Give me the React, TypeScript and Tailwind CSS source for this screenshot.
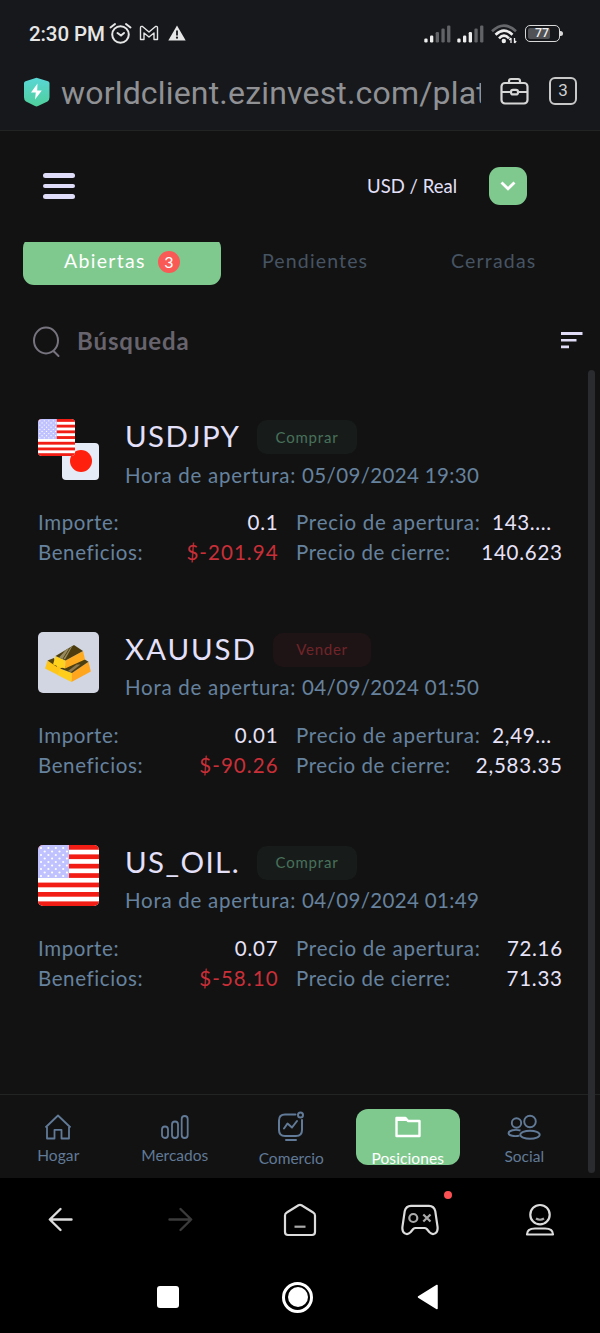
import type { ReactNode } from "react";

type Side = "buy" | "sell";

interface Position {
  symbol: string;
  symbolClass: string;
  side: Side;
  opened: string;
  amount: string;
  profit: string;
  openPrice: string;
  openPriceClass: string;
  closePrice: string;
  icon: ReactNode;
}

function UsFlag({ size }: { size: number }) {
  const stripes = [0, 2, 4, 6, 8, 10, 12];
  const stars: ReactNode[] = [];
  for (let r = 0; r < 9; r++) {
    for (let c = 0; c < 4; c++) {
      stars.push(<circle key={`${r}-${c}`} cx={3 + c * 7.4 + (r % 2 ? 3.7 : 0)} cy={3 + r * 3.5} r="1.1" fill="#fff" />);
    }
  }
  return (
    <svg width={size} height={size} viewBox="0 0 61 61" className="block">
      <rect width="61" height="61" fill="#fff" />
      {stripes.map((i) => (
        <rect key={i} y={i * 4.7} width="61" height="4.7" fill="#f21d14" />
      ))}
      <rect width="31" height="33" fill="#bfc2ff" />
      {stars}
    </svg>
  );
}

function UsdJpyIcon() {
  return (
    <div className="relative h-[61px] w-[61px] shrink-0">
      <div className="absolute right-0 bottom-0 flex h-[37px] w-[37px] items-center justify-center rounded-[4px] bg-[#e6ebf8]">
        <div className="h-[22px] w-[22px] rounded-full bg-[#ff210d]" />
      </div>
      <div className="absolute top-0 left-0 h-[37px] w-[37px] overflow-hidden rounded-[4px]">
        <UsFlag size={37} />
      </div>
    </div>
  );
}

function GoldIcon() {
  return (
    <div className="h-[61px] w-[61px] shrink-0 overflow-hidden rounded-[5px] bg-[#d1d6e2]">
      <svg width="61" height="61" viewBox="0 0 61 61">
        <path d="M9.500 28.500 7 36.500l13 6.500 4-8z" fill="#ffc61a" />
        <path d="m9.500 28.500 6.500-2.500 3 9z" fill="#55440f" />
        <path d="m22 36.500 12 4.500-.5 9L19.500 43z" fill="#ffce1c" />
        <path d="m34 41 16.500-11.200 2.300 9.700L33.500 50z" fill="#ffa51e" />
        <path d="m22 36.500 24-9.500 4.500 2.800L34 41z" fill="#4d3e10" />
        <path d="m30 39 8.500-6.500 4 0-9.500 7.500z" fill="#8d7a50" />
        <path d="m17.500 24 10 4.500-.5 8L15 32.500z" fill="#ffd31d" />
        <path d="m27.500 28.500 17.500-9.500 2 8.500-20 9z" fill="#ffab20" />
        <path d="m17.500 24 18.500-11 9 6-17.500 9.500z" fill="#4c3c0e" />
        <path d="m28 17.700 3.500-2L24.500 27 21 25.500zM33 14.700l1.500-.8-7.500 13.500-1.500-.6z" fill="#96895f" />
      </svg>
    </div>
  );
}

const positions: Position[] = [
  {
    symbol: "USDJPY",
    symbolClass: "w-[114px] tracking-[1.35px]",
    side: "buy",
    opened: "05/09/2024 19:30",
    amount: "0.1",
    profit: "$-201.94",
    openPrice: "143....",
    openPriceClass: "pr-[11px]",
    closePrice: "140.623",
    icon: <UsdJpyIcon />,
  },
  {
    symbol: "XAUUSD",
    symbolClass: "w-[130px] tracking-[1.9px]",
    side: "sell",
    opened: "04/09/2024 01:50",
    amount: "0.01",
    profit: "$-90.26",
    openPrice: "2,49...",
    openPriceClass: "pr-[11px]",
    closePrice: "2,583.35",
    icon: <GoldIcon />,
  },
  {
    symbol: "US_OIL.",
    symbolClass: "w-[114px] tracking-[1.4px]",
    side: "buy",
    opened: "04/09/2024 01:49",
    amount: "0.07",
    profit: "$-58.10",
    openPrice: "72.16",
    openPriceClass: "",
    closePrice: "71.33",
    icon: (
      <div className="h-[61px] w-[61px] shrink-0 overflow-hidden rounded-[5px]">
        <UsFlag size={61} />
      </div>
    ),
  },
];

function PositionCard({ p }: { p: Position }) {
  return (
    <article className="h-[212.8px] pr-[38px] pl-[38px]">
      <div className="flex gap-[26px]">
        {p.icon}
        <div className="pt-px">
          <div className="flex h-8 gap-[18px]">
            <h2 className={`text-[29.5px] leading-[31px] whitespace-nowrap text-[#e4e0fa] ${p.symbolClass}`}>{p.symbol}</h2>
            {p.side === "buy" ? (
              <span className="flex h-[34px] w-[100px] items-center justify-center rounded-[10px] bg-[#171c1b] text-[15px] tracking-[0.8px] text-[#48715a]">Comprar</span>
            ) : (
              <span className="flex h-[34px] w-[98px] items-center justify-center rounded-[10px] bg-[#1e1415] text-[15px] tracking-[0.75px] text-[#712429]">Vender</span>
            )}
          </div>
          <p className="mt-[8.6px] text-[20.5px] leading-7 whitespace-nowrap text-[#66829e]">
            <span className="tracking-[0.73px]">Hora de apertura: </span>
            <span className="tracking-[0.36px]">{p.opened}</span>
          </p>
        </div>
      </div>
      <dl className="mt-[19.8px] grid grid-cols-[240px_266px] gap-x-[18px] text-[20.5px] leading-[29.6px] whitespace-nowrap text-[#66829e]">
        <div className="flex justify-between">
          <dt className="tracking-[0.62px]">Importe:</dt>
          <dd className="-mr-[0.5px] tracking-[0.8px] text-[#e7e3fa]">{p.amount}</dd>
        </div>
        <div className="flex justify-between">
          <dt className="tracking-[0.74px]">Precio de apertura:</dt>
          <dd className={`-mr-[0.7px] tracking-[0.65px] text-[#e7e3fa] ${p.openPriceClass}`}>{p.openPrice}</dd>
        </div>
        <div className="flex justify-between">
          <dt className="tracking-[0.6px]">Beneficios:</dt>
          <dd className="-mr-[0.6px] tracking-[1.05px] text-[#c92f38]">{p.profit}</dd>
        </div>
        <div className="flex justify-between">
          <dt className="tracking-[0.56px]">Precio de cierre:</dt>
          <dd className="-mr-[0.7px] tracking-[0.75px] text-[#e7e3fa]">{p.closePrice}</dd>
        </div>
      </dl>
    </article>
  );
}

function Signal({ level }: { level: number }) {
  const bars = [4, 7, 10.5, 14, 17];
  return (
    <svg width="27" height="18" viewBox="0 0 27 18">
      {bars.map((h, i) => (
        <rect key={h} x={0.3 + i * 5.700} y={17.500 - h} width="3.300" height={h} rx="1.2" fill={i < level ? "#eeeeee" : "#626366"} />
      ))}
    </svg>
  );
}

function StatusBar() {
  return (
    <div className="flex h-[67px] items-center pl-[29px] text-[#e6e6e6]">
      <span className="w-[80px] pt-px font-['Roboto',sans-serif] text-[20.5px] leading-6 font-medium tracking-[-0.1px] whitespace-nowrap">2:30 PM</span>
      <svg width="24" height="22" viewBox="0 0 24 22" fill="none" stroke="currentColor" strokeWidth="2" strokeLinecap="round" className="-mt-0.5">
        <circle cx="11.500" cy="12.500" r="8.300" />
        <path d="M1.500 5.500 6 2M21.500 5.500 17 2M8.500 11l3.500 2.500 3-2.500" />
      </svg>
      <svg width="20" height="16" viewBox="0 0 20 16" fill="none" stroke="currentColor" strokeWidth="1.400" strokeLinejoin="round" className="-mt-px ml-[6px]">
        <path d="M1.500 14.500V3Q1.500.8 3.500 1.500L10 7l6.500-5.500q2-.7 2 1.500v11.500H15V8l-5 4-5-4v6.500z" />
      </svg>
      <svg width="18" height="16" viewBox="0 0 18 16" className="-mt-px ml-[9px]">
        <path d="M9 .5 17.700 15.500H.3z" fill="#e6e6e6" />
        <path d="M9 5.500v5" stroke="#17181c" strokeWidth="1.800" />
        <circle cx="9" cy="12.700" r="1.100" fill="#17181c" />
      </svg>
      <div className="ml-[238px] flex items-center gap-[6px]">
        <Signal level={2} />
        <Signal level={3} />
      </div>
      <svg width="26" height="20" viewBox="0 0 26 20" fill="none" strokeWidth="2.600" className="ml-[7px]">
        <path d="M1 7.300Q13-4 25 7.300" stroke="#66676b" />
        <path d="M4.500 10.800Q13 2.500 21.500 10.800M8 14.300Q13 9 18 14.300" stroke="#eee" />
        <circle cx="12.800" cy="17" r="2.200" fill="#eee" />
        <path d="M20 19v-5m-1.800 2 1.800-2M23.500 14v5m1.700-2-1.700 2" stroke="#eee" strokeWidth="1.300" />
      </svg>
      <div className="ml-[8px] flex h-[17px] w-[35px] items-center rounded-[5px] border-[1.5px] border-[#d8d8d8] p-[2px]">
        <div className="flex h-full w-[22px] items-center rounded-[2px] bg-[#515256] pl-[7px] font-['Roboto',sans-serif] text-[12.5px] leading-none font-medium text-[#eeeeee]">77</div>
      </div>
      <div className="h-[5px] w-[2.5px] rounded-r bg-[#d8d8d8]" />
    </div>
  );
}

function AddressBar() {
  return (
    <div className="flex h-[63px] items-start pt-2 pl-[23px]">
      <svg width="28" height="30" viewBox="0 0 28 30" className="mt-[2px]">
        <defs>
          <linearGradient id="shield" x2="0" y2="1">
            <stop stopColor="#59d7d6" />
            <stop offset="1" stopColor="#4fcf9b" />
          </linearGradient>
        </defs>
        <path d="M13.500.8 25 4.300q1.500.5 1.500 2v14q0 3-2 4.300l-9.500 4.500q-1.500.8-3 0L3 24.600q-2-1.300-2-4.300v-14q0-1.500 1.500-2z" fill="url(#shield)" />
        <path d="m14.500 6.500-6.500 9h4.800l-.8 7 6.800-9h-4.600z" fill="#fff" />
      </svg>
      <div className="ml-[10px] w-[420px] overflow-hidden font-['Roboto',sans-serif] text-[32px] leading-[36px] tracking-[0.18px] whitespace-nowrap text-[#909194]">worldclient.ezinvest.com/plat</div>
      <svg width="29" height="29" viewBox="0 0 29 29" fill="none" stroke="#d6d6d6" strokeWidth="2.200" strokeLinejoin="round" className="mt-[2px] ml-[19px]">
        <rect x="1.500" y="6" width="26" height="20.500" rx="3.500" />
        <path d="M9 6V4q0-2 2-2h7q2 0 2 2v2M2 15h9M18 15h9" />
        <rect x="11" y="12.800" width="7" height="4.600" rx="2" />
      </svg>
      <div className="mt-[2px] ml-[20px] flex h-[28px] w-[28px] items-center justify-center rounded-[6px] border-2 border-[#c8c8c8] font-['Roboto',sans-serif] text-[17px] text-[#d0d0d0]">3</div>
    </div>
  );
}

function AppHeader() {
  return (
    <header className="flex h-[111px] items-start pt-9 pl-[43px]">
      <div className="mt-[6px] flex flex-col gap-[6px]">
        <div className="h-[4.600px] w-8 rounded-full bg-[#dedcf8]" />
        <div className="h-[4.600px] w-8 rounded-full bg-[#dedcf8]" />
        <div className="h-[4.600px] w-8 rounded-full bg-[#dedcf8]" />
      </div>
      <div className="ml-[292px] w-[122px] text-[18.5px] leading-[38px] tracking-[0.02px] whitespace-nowrap text-[#e4e0fa]">USD / Real</div>
      <button className="flex h-[38px] w-[38px] items-center justify-center rounded-[11px] bg-[#7fc98f]">
        <svg width="16" height="10" viewBox="0 0 16 10" fill="none" stroke="#fff" strokeWidth="2.800">
          <path d="m1.500 1.500 6.500 6.300 6.500-6.300" />
        </svg>
      </button>
    </header>
  );
}

function Tabs() {
  return (
    <div className="flex h-[68px] items-start overflow-hidden pl-[23px] text-[19.500px] leading-6 text-[#465463]">
      <div className="-mt-[5px] flex h-[48px] w-[198px] rounded-[11px] bg-[#7fc98f] pt-[12px] pl-[41px] text-white">
        <span className="w-[94px] tracking-[1.3px]">Abiertas</span>
        <span className="mt-[2px] flex h-[22px] w-[22px] items-center justify-center rounded-full bg-[#fa5a55] text-[16px] leading-none">3</span>
      </div>
      <span className="mt-[7px] ml-[41px] w-[189px] tracking-[1.15px]">Pendientes</span>
      <span className="mt-[7px] tracking-[1.2px]">Cerradas</span>
    </div>
  );
}

function Search() {
  return (
    <div className="flex h-[64px] items-center pl-[33px]">
      <svg width="28" height="32" viewBox="0 0 28 32" fill="none" stroke="#77737f" strokeWidth="2" strokeLinecap="round">
        <ellipse cx="13" cy="14.500" rx="12" ry="13" />
        <path d="m21 25.500 4.500 4.500" />
      </svg>
      <span className="-mt-[2px] ml-[16px] w-[484px] text-[24px] leading-7 font-bold tracking-[0.9px] text-[#67646e]">Búsqueda</span>
      <svg width="22" height="17" viewBox="0 0 22 17" fill="#e0dcf8" className="-mt-[3px]">
        <path d="M0 0h21.500v3H0zM0 7h15.500v2.600H0zM0 13.500h8v2.700H0z" />
      </svg>
    </div>
  );
}

function NavItem({ label, children, className }: { label: string; children: ReactNode; className: string }) {
  return (
    <div className={`flex w-[116.500px] flex-col items-center text-[15.500px] leading-5 text-[#617a97] ${className}`}>
      {children}
      <span>{label}</span>
    </div>
  );
}

function AppNav() {
  return (
    <nav className="h-[85px] border-t border-[#222424]">
      <div className="flex h-full w-[583px] items-start">
        <NavItem label="Hogar" className="gap-[4px] pt-[18px] tracking-[0.1px]">
          <svg width="28" height="28" viewBox="0 0 28 28" fill="none" stroke="currentColor" strokeWidth="1.800" strokeLinejoin="round">
            <path d="M1.500 14.500 14 2.500l12.500 12M3 14v11.500h7.500v-8.700h7v8.700H25V14" />
          </svg>
        </NavItem>
        <NavItem label="Mercados" className="gap-[4px] pt-[18px]">
          <svg width="28" height="28" viewBox="0 0 28 28" fill="none" stroke="currentColor" strokeWidth="1.800">
            <rect x="1" y="13.500" width="6" height="11.500" rx="3" />
            <rect x="11" y="8.500" width="6" height="16.500" rx="3" />
            <rect x="20.700" y="3" width="6" height="22" rx="3" />
          </svg>
        </NavItem>
        <NavItem label="Comercio" className="gap-[5px] pt-[16px]">
          <svg width="28" height="32" viewBox="0 0 28 32" fill="none" stroke="currentColor" strokeWidth="2" strokeLinecap="round" strokeLinejoin="round">
            <path d="M18.500 3.500H8q-6 0-6 6v9.500q0 6 6 6h11q6 0 6-6V9" />
            <circle cx="23.500" cy="4" r="2.500" />
            <path d="m7 17.500 3.500-5 4.500 4 5-6.500M9 29h10" />
          </svg>
        </NavItem>
        <div className="flex w-[116.500px] justify-center pt-[14px]">
          <div className="flex h-[56px] w-[104px] flex-col items-center overflow-hidden rounded-[12px] bg-[#7fc98f] pt-[7px] text-[15.500px] leading-5 tracking-[0.1px] text-white">
            <svg width="26" height="22" viewBox="0 0 26 22" fill="none" stroke="#fff" strokeWidth="2.400" strokeLinejoin="round" className="shrink-0">
              <path d="M1.500 20V2h9l2.500 3h11.500v15z" />
              <path d="M2 2h8l2.500 3H2z" fill="#fff" stroke="none" />
            </svg>
            <span className="mt-[10px]">Posiciones</span>
          </div>
        </div>
        <NavItem label="Social" className="gap-[5px] pt-[18px]">
          <svg width="34" height="28" viewBox="0 0 34 28" fill="none" stroke="currentColor" strokeWidth="1.900">
            <circle cx="9.500" cy="10" r="4.700" />
            <circle cx="23" cy="8.500" r="5.800" />
            <ellipse cx="23" cy="21.800" rx="9.700" ry="4" />
            <path d="M13.500 17.500C8 16 1.500 17.500 1.500 20.300c0 2.300 6 3.500 11 2.300" />
          </svg>
        </NavItem>
      </div>
    </nav>
  );
}

function BrowserNav() {
  return (
    <nav className="grid h-[81px] grid-cols-5 place-items-center bg-black pt-[2px] text-[#dcdcdc]">
      <svg width="25" height="25" viewBox="0 0 25 25" fill="none" stroke="currentColor" strokeWidth="2.400" strokeLinecap="round" strokeLinejoin="round">
        <path d="M12.500 2 1.800 12.500 12.500 23M2 12.500h21.500" />
      </svg>
      <svg width="25" height="25" viewBox="0 0 25 25" fill="none" stroke="#3b3b3b" strokeWidth="2.400" strokeLinecap="round" strokeLinejoin="round">
        <path d="m12.500 2 10.700 10.500L12.500 23M23 12.500H1.500" />
      </svg>
      <svg width="34" height="34" viewBox="0 0 34 34" fill="none" stroke="currentColor" strokeWidth="2.200" strokeLinejoin="round">
        <path d="M2 12.500q0-2 1.800-3L15.500 2.300q1.500-.8 3 0L30.200 9.500q1.800 1 1.800 3V29q0 3-3 3H5q-3 0-3-3z" />
        <path d="M11.500 23.700h11" stroke="#aaa" />
      </svg>
      <div className="relative flex">
        <svg width="38" height="32" viewBox="0 0 38 32" fill="none" stroke="currentColor" strokeWidth="2.200" strokeLinejoin="round">
          <path d="M10 1.800h18q5 0 6.300 5.500l2.200 15c1 7.500-4.500 9.500-8 6l-2.700-3.300q-1-1-2.500-1h-8.600q-1.500 0-2.500 1l-2.700 3.300c-3.500 3.500-9 1.500-8-6l2.200-15Q5 1.800 10 1.800z" />
          <circle cx="12.300" cy="14" r="4" stroke="#aaa" />
          <path d="m22.300 10.500 7.200 7m0-7-7.200 7" stroke="#aaa" />
        </svg>
        <div className="absolute -top-[13px] -right-[13px] h-2 w-2 rounded-full bg-[#fb5054]" />
      </div>
      <svg width="30" height="34" viewBox="0 0 30 34" fill="none" stroke="currentColor" strokeWidth="2.200" strokeLinejoin="round">
        <circle cx="15" cy="11.700" r="9.700" />
        <path d="M11 15.500q4 2.500 8 0" stroke="#aaa" />
        <path d="M2 31.500q0-6 8-6h10q8 0 8 6z" />
      </svg>
    </nav>
  );
}

function SystemNav() {
  return (
    <nav className="flex h-[74px] items-center bg-black pt-[2px] pl-[157px]">
      <div className="h-[22px] w-[22px] rounded-[3px] bg-white" />
      <div className="ml-[103px] flex h-[31px] w-[31px] items-center justify-center rounded-full border-[3px] border-white">
        <div className="h-[20px] w-[20px] rounded-full bg-white" />
      </div>
      <svg width="22" height="26" viewBox="0 0 22 26" className="ml-[104px]">
        <path d="M20 1.500v23L1.500 13z" fill="#fff" stroke="#fff" strokeWidth="1.500" strokeLinejoin="round" />
      </svg>
    </nav>
  );
}

export default function App() {
  return (
    <div className="relative flex h-[1333px] w-[600px] flex-col overflow-hidden bg-[#121212] font-['Lato',sans-serif]">
      <div className="h-[131px] shrink-0 border-b border-[#222424] bg-[#17181c]">
        <StatusBar />
        <AddressBar />
      </div>
      <AppHeader />
      <Tabs />
      <Search />
      <main className="h-[720px] shrink-0 pt-[45.4px]">
        {positions.map((p) => (
          <PositionCard key={p.symbol} p={p} />
        ))}
      </main>
      <AppNav />
      <BrowserNav />
      <SystemNav />
      <div className="absolute top-[370px] right-[5px] h-[803px] w-[7px] rounded-full bg-[#2a2b2f]" />
    </div>
  );
}
